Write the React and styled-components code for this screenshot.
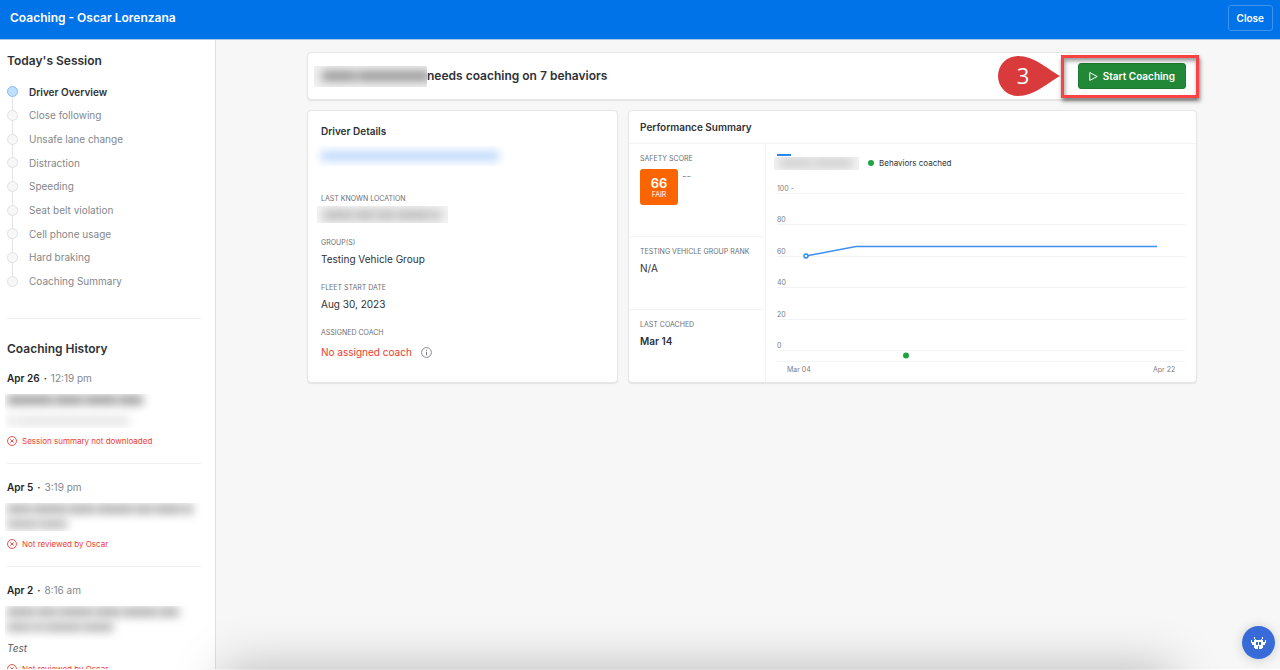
import React from 'react';
import styled, { createGlobalStyle } from 'styled-components';

const GlobalStyle = createGlobalStyle`
  * {
    box-sizing: border-box;
  }

  body {
    margin: 0;
    background-color: #f7f7f7;
    color: #2f3237;
    font-family: Inter, "Liberation Sans", sans-serif;
    font-size: 10px;
    line-height: 16px;
  }

  h1, h2, h3, p, ol, ul, dl, dd {
    margin: 0;
    padding: 0;
  }

  ol, ul {
    list-style: none;
  }

  button {
    font-family: inherit;
    cursor: pointer;
  }
`;

const Page = styled.div`
  height: 100vh;
  display: flex;
  flex-direction: column;
  overflow: hidden;
  border-bottom: 1px solid #ffffff;
`;

const TopBar = styled.header`
  flex: none;
  display: flex;
  justify-content: space-between;
  align-items: center;
  padding: 5px 7px 8px 10px;
  background-color: #0073e9;
  border-bottom: 1px solid #a9c4e2;
`;

const TopTitle = styled.h1`
  color: #ffffff;
  font-size: 12px;
  font-weight: 600;
`;

const CloseButton = styled.button`
  height: 26px;
  padding: 0 8px;
  border: 1px solid #3f93ee;
  border-radius: 3px;
  background-color: transparent;
  color: #ffffff;
  font-size: 10px;
  font-weight: 600;
`;

const Body = styled.div`
  flex: 1;
  display: flex;
  min-height: 0;
`;

const SideBar = styled.aside`
  flex: none;
  width: 216px;
  padding: 13px 14px 0 7px;
  overflow: hidden;
  background-color: #ffffff;
  border-right: 1px solid #dfe0e1;
`;

const SideTitle = styled.h2`
  font-size: 12px;
  font-weight: 600;
  line-height: 16px;
`;

const Steps = styled.ol`
  display: grid;
  grid-auto-rows: 1fr;
  height: 213px;
  margin: 11px 0 25px;
`;

const Step = styled.li`
  position: relative;
  display: flex;
  align-items: center;
  gap: 11px;
  color: ${({ $active }) => ($active ? '#2f3237' : '#84878a')};
  font-weight: ${({ $active }) => ($active ? 600 : 400)};

  &:not(:last-child)::before {
    content: '';
    position: absolute;
    left: 5px;
    top: 50%;
    width: 1px;
    height: 100%;
    background-color: #e4e4e4;
  }
`;

const StepDot = styled.span`
  position: relative;
  width: 11px;
  height: 11px;
  border: 1px solid ${({ $active }) => ($active ? '#85bdf8' : '#e2e2e2')};
  border-radius: 50%;
  background-color: ${({ $active }) => ($active ? '#c0e0ff' : '#f7f7f7')};
`;

const History = styled.section`
  padding-top: 22px;
  border-top: 1px solid #efefef;
`;

const Session = styled.li`
  padding: ${({ $first }) => ($first ? '13px' : '15px')} 0 14px;
  border-bottom: 1px solid #f1f1f1;
`;

const SessionDate = styled.h3`
  display: flex;
  gap: 4px;
  color: #84878a;
  font-size: 10px;
  font-weight: 400;

  strong {
    color: #1f2226;
    font-weight: 600;
  }
`;

const Note = styled.p`
  color: #5a5d61;
  font-style: italic;
`;

const Warning = styled.p`
  display: flex;
  align-items: center;
  gap: 5px;
  margin-top: 5px;
  color: #ef3a30;
  font-size: 8px;
`;

const Mask = styled.div`
  height: ${({ $height }) => $height}px;
  width: ${({ $width }) => ($width ? `${$width}px` : 'auto')};
  margin: ${({ $margin }) => $margin || '0'};
  padding: ${({ $pad }) => $pad || '0'};
  overflow: hidden;
  background-color: ${({ $bg }) => $bg || 'transparent'};
`;

const MaskLine = styled.div`
  display: flex;
  gap: 2px;
  height: 10px;
  margin-bottom: ${({ $gap }) => $gap}px;
  filter: blur(5px);
`;

const MaskWord = styled.span`
  flex: none;
  width: ${({ $width }) => $width}px;
  background-color: ${({ $color }) => $color};
`;

const Main = styled.main`
  flex: 1;
  min-width: 0;
  padding: 12px 83px 0 91px;
`;

const Card = styled.section`
  background-color: #ffffff;
  border: 1px solid #e6e6e7;
  border-radius: 4px;
  box-shadow: 0 1px 1px rgba(0, 0, 0, 0.08);
`;

const Banner = styled(Card)`
  display: flex;
  align-items: center;
  height: 48px;
  margin-bottom: 10px;
  padding: 0 10px 0 6px;
`;

const BannerTitle = styled.h2`
  flex: 1;
  font-size: 12px;
  font-weight: 600;
`;

const Callout = styled.div`
  position: relative;
`;

const CalloutFrame = styled.div`
  position: absolute;
  inset: -8px -13px -9px -17px;
  border: 3px solid #fb4245;
  box-shadow: 1px 3px 4px rgba(0, 0, 0, 0.5), inset 1px 3px 4px rgba(0, 0, 0, 0.4);
  pointer-events: none;
`;

const CalloutPin = styled.svg`
  position: absolute;
  right: 126px;
  top: -7px;
  width: 62px;
  height: 40px;
`;

const StartButton = styled.button`
  display: flex;
  align-items: center;
  gap: 5px;
  height: 26px;
  padding: 0 10px;
  border: 1px solid #1d7c31;
  border-radius: 3px;
  background-color: #218838;
  color: #ffffff;
  font-size: 10px;
  font-weight: 600;
`;

const Columns = styled.div`
  display: grid;
  grid-template-columns: minmax(0, 311px) minmax(0, 1fr);
  gap: 10px;
`;

const Details = styled(Card)`
  padding: 12px 13px 22px;
`;

const CardTitle = styled.h2`
  font-size: 10px;
  font-weight: 600;
`;

const Label = styled.dt`
  color: #6c6f73;
  font-size: 7px;
  line-height: 12px;
  text-transform: uppercase;
`;

const Value = styled.dd`
  display: flex;
  align-items: center;
  gap: 9px;
  margin: ${({ $margin }) => $margin || '2px 0 15px'};
  color: ${({ $alert }) => ($alert ? '#ef3a30' : '#2f3237')};
  font-weight: ${({ $strong }) => ($strong ? 600 : 400)};
`;

const Performance = styled(Card)`
  display: flex;
  flex-direction: column;
`;

const PerformanceHead = styled.div`
  padding: 8px 11px;
  border-bottom: 1px solid #f4f4f4;
`;

const PerformanceBody = styled.div`
  flex: 1;
  display: flex;
`;

const Stats = styled.dl`
  flex: none;
  display: grid;
  grid-template-rows: 92fr 73fr 73fr;
  width: 137px;
  border-right: 1px solid #f4f4f4;
`;

const Stat = styled.div`
  padding: 9px 0 0 11px;

  & + & {
    border-top: 1px solid #f4f4f4;
  }
`;

const ScoreRow = styled.dd`
  display: flex;
  gap: 4px;
  margin-top: 4px;
  color: #84878a;
  line-height: 14px;
`;

const Score = styled.div`
  display: flex;
  flex-direction: column;
  align-items: center;
  width: 38px;
  height: 36px;
  padding-top: 6px;
  border-radius: 3px;
  background-color: #fb6500;
  color: #ffffff;
  font-size: 7px;
  line-height: 8px;

  strong {
    font-size: 13px;
    font-weight: 600;
    line-height: 16px;
  }
`;

const ChartPanel = styled.div`
  flex: 1;
  min-width: 0;
  padding: 10px 11px 0 8px;
`;

const Legend = styled.div`
  display: flex;
  align-items: center;
  gap: 5px;
  height: 17px;
  font-size: 8px;
`;

const LegendDriver = styled.div`
  align-self: flex-start;
  width: 89px;
`;

const LegendLine = styled.div`
  width: 14px;
  height: 2px;
  margin: 0 0 1px 3px;
  background-color: #2c86f0;
`;

const LegendDot = styled.span`
  width: 6px;
  height: 6px;
  border-radius: 50%;
  background-color: #1ea53f;
`;

const Chart = styled.svg`
  display: block;
  width: 100%;

  text {
    fill: #7b7e82;
    font-size: 7px;
  }
`;

const HelpButton = styled.button`
  position: fixed;
  right: 5px;
  bottom: 11px;
  display: flex;
  align-items: center;
  justify-content: center;
  width: 33px;
  height: 33px;
  padding: 0;
  border: 0;
  border-radius: 50%;
  background-color: #386bd7;
  box-shadow: 0 1px 12px rgba(0, 0, 0, 0.18);
`;

const BottomShade = styled.div`
  position: fixed;
  left: 226px;
  right: 110px;
  top: 100%;
  height: 60px;
  box-shadow: 0 0 50px 2px rgba(0, 0, 0, 0.25);
  pointer-events: none;
`;

const steps = [
  'Driver Overview',
  'Close following',
  'Unsafe lane change',
  'Distraction',
  'Speeding',
  'Seat belt violation',
  'Cell phone usage',
  'Hard braking',
  'Coaching Summary',
];

const sessions = [
  {
    date: 'Apr 26',
    time: '12:19 pm',
    height: 34,
    lines: [
      { words: [46, 28, 32, 24], color: '#a0a0a0', gap: 11 },
      { words: [8, 112], color: '#e6e6e6' },
    ],
    warning: 'Session summary not downloaded',
  },
  {
    date: 'Apr 5',
    time: '3:19 pm',
    height: 28,
    lines: [
      { words: [24, 34, 26, 36, 18, 26, 10], color: '#b4b4b4' },
      { words: [30, 28], color: '#bdbdbd' },
    ],
    warning: 'Not reviewed by Oscar',
  },
  {
    date: 'Apr 2',
    time: '8:16 am',
    height: 34,
    lines: [
      { words: [28, 20, 34, 26, 34, 20], color: '#b4b4b4' },
      { words: [24, 10, 36, 30], color: '#bababa' },
    ],
    note: 'Test',
    warning: 'Not reviewed by Oscar',
  },
];

const gridLines = [
  { label: '100 -', y: 17 },
  { label: '80', y: 48 },
  { label: '60', y: 80 },
  { label: '40', y: 111 },
  { label: '20', y: 143 },
  { label: '0', y: 174 },
];

const invader = [
  '..x.....x..',
  '...x...x...',
  'x.xxxxxxx.x',
  'xxxx.x.xxxx',
  '.xxx.x.xxx.',
  '..xxxxxxx..',
  '..xxx.xxx..',
  '...xx.xx...',
];

const Redacted = ({ words, color, gap = 5 }) => (
  <MaskLine $gap={gap}>
    {words.map((width, i) => <MaskWord key={i} $width={width} $color={color} />)}
  </MaskLine>
);

const CrossIcon = () => (
  <svg width="10" height="10" viewBox="0 0 18 18" fill="none" stroke="#ef3a30" strokeWidth="1.6" aria-hidden="true">
    <circle cx="9" cy="9" r="8" />
    <path d="M6 6l6 6M12 6l-6 6" />
  </svg>
);

const InfoIcon = () => (
  <svg width="11" height="11" viewBox="0 0 22 22" fill="none" stroke="#7b7e82" strokeWidth="1.8" aria-hidden="true">
    <circle cx="11" cy="11" r="9.8" />
    <path d="M11 9.5v7M11 5.5v2" strokeWidth="2.2" />
  </svg>
);

const PlayIcon = () => (
  <svg width="9" height="9" viewBox="0 0 9 9" fill="none" stroke="#ffffff" strokeLinejoin="round" aria-hidden="true">
    <path d="M0.8 0.6v7.8l7.4-3.9z" />
  </svg>
);

const SideNav = () => (
  <SideBar>
    <SideTitle>Today's Session</SideTitle>
    <Steps>
      {steps.map((step, i) => (
        <Step key={step} $active={i === 0}>
          <StepDot $active={i === 0} />
          {step}
        </Step>
      ))}
    </Steps>
    <History>
      <SideTitle>Coaching History</SideTitle>
      <ul>
        {sessions.map(({ date, time, height, lines, note, warning }, i) => (
          <Session key={date} $first={i === 0}>
            <SessionDate><strong>{date}</strong><strong>·</strong><span>{time}</span></SessionDate>
            <Mask $height={height} $margin="8px 0 0 -2px" $pad="1px 0 0 2px" aria-hidden="true">
              {lines.map((line, n) => <Redacted key={n} {...line} />)}
            </Mask>
            {note && <Note>{note}</Note>}
            <Warning><CrossIcon />{warning}</Warning>
          </Session>
        ))}
      </ul>
    </History>
  </SideBar>
);

const DriverDetails = () => (
  <Details>
    <CardTitle>Driver Details</CardTitle>
    <Mask $height={20} $margin="7px 0 27px -8px" $pad="5px 0 0 8px" aria-hidden="true">
      <Redacted words={[178]} color="#bcd9fb" />
    </Mask>
    <dl>
      <Label>Last known location</Label>
      <Mask as="dd" $height={17} $width={131} $margin="1px 0 14px -4px" $pad="4px 0 0 6px" $bg="#f4f4f4" aria-hidden="true">
        <Redacted words={[30, 20, 18, 34, 8]} color="#bcbcbc" />
      </Mask>
      <Label>Group(s)</Label>
      <Value>Testing Vehicle Group</Value>
      <Label>Fleet start date</Label>
      <Value>Aug 30, 2023</Value>
      <Label>Assigned coach</Label>
      <Value $alert $margin="5px 0 0">No assigned coach <InfoIcon /></Value>
    </dl>
  </Details>
);

const ScoreChart = () => (
  <ChartPanel>
    <Legend>
      <LegendDriver>
        <LegendLine />
        <Mask $height={13} $width={85} $pad="1px 0 0 5px" $bg="#f3f3f3" aria-hidden="true">
          <Redacted words={[34, 38]} color="#cfcfcf" />
        </Mask>
      </LegendDriver>
      <LegendDot />
      Behaviors coached
    </Legend>
    <Chart viewBox="-3 -5 411 210" role="img" aria-label="Safety score">
      {gridLines.map(({ label, y }) => (
        <React.Fragment key={label}>
          <path d={`M0 ${y + 0.5}H408`} stroke="#f3f3f3" />
          <text x="0" y={y - 2}>{label}</text>
        </React.Fragment>
      ))}
      <path d="M0 185.5H408" stroke="#f3f3f3" />
      <path d="M29 80L79 70.5H380" fill="none" stroke="#3f8ff0" strokeWidth="1.5" />
      <circle cx="29" cy="80" r="2" fill="#ffffff" stroke="#2c86f0" strokeWidth="1.4" />
      <circle cx="129" cy="179.5" r="3" fill="#1ea53f" />
      <text x="10" y="196">Mar 04</text>
      <text x="376" y="196">Apr 22</text>
    </Chart>
  </ChartPanel>
);

const App = () => (
  <Page>
    <GlobalStyle />
    <TopBar>
      <TopTitle>Coaching - Oscar Lorenzana</TopTitle>
      <CloseButton type="button">Close</CloseButton>
    </TopBar>
    <Body>
      <SideNav />
      <Main>
        <Banner>
          <Mask $height={21} $width={113} $pad="5px 0 0 8px" $bg="#f1f1f1" aria-hidden="true">
            <Redacted words={[34, 72]} color="#949494" />
          </Mask>
          <BannerTitle>needs coaching on 7 behaviors</BannerTitle>
          <Callout>
            <StartButton type="button"><PlayIcon />Start Coaching</StartButton>
            <CalloutFrame />
            <CalloutPin viewBox="0 0 62 40" aria-hidden="true">
              <path d="M62 20C48 28 36 40 20 40A20 20 0 0 1 20 0C36 0 48 12 62 20z" fill="#d93a3c" />
              <text x="25" y="28" textAnchor="middle" fill="#ffffff" fontFamily="'Open Sans', sans-serif" fontSize="22">3</text>
            </CalloutPin>
          </Callout>
        </Banner>
        <Columns>
          <DriverDetails />
          <Performance>
            <PerformanceHead>
              <CardTitle>Performance Summary</CardTitle>
            </PerformanceHead>
            <PerformanceBody>
              <Stats>
                <Stat>
                  <Label>Safety score</Label>
                  <ScoreRow>
                    <Score><strong>66</strong>FAIR</Score>
                    --
                  </ScoreRow>
                </Stat>
                <Stat>
                  <Label>Testing vehicle group rank</Label>
                  <Value>N/A</Value>
                </Stat>
                <Stat>
                  <Label>Last coached</Label>
                  <Value $strong>Mar 14</Value>
                </Stat>
              </Stats>
              <ScoreChart />
            </PerformanceBody>
          </Performance>
        </Columns>
      </Main>
    </Body>
    <BottomShade />
    <HelpButton type="button" aria-label="Help">
      <svg width="15" height="12" viewBox="0 0 11 8" preserveAspectRatio="none" fill="#ffffff" shapeRendering="crispEdges" aria-hidden="true">
        {invader.map((row, y) => [...row].map((cell, x) => (
          cell === 'x' && <rect key={`${x}-${y}`} x={x} y={y} width="1" height="1" />
        )))}
      </svg>
    </HelpButton>
  </Page>
);

export default App;
